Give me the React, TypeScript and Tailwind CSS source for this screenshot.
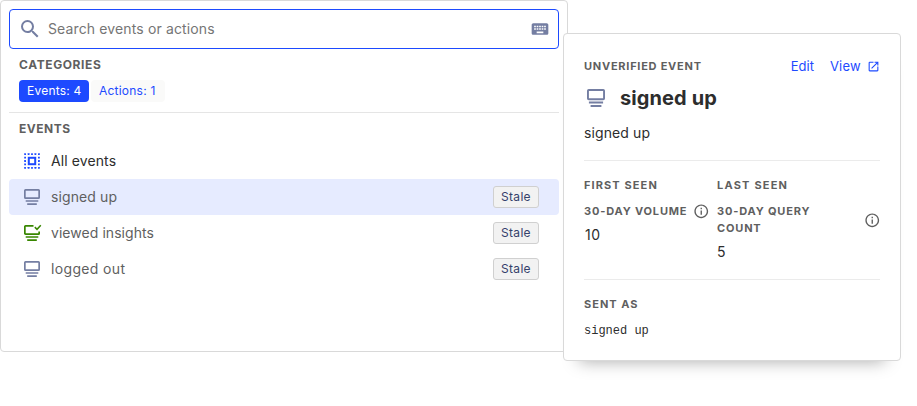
import React from 'react'
import { MdInfoOutline, MdKeyboard, MdOpenInNew, MdSearch } from 'react-icons/md'

function EventIcon({ size }: { size: number }) {
    return (
        <svg width={size} height={size} viewBox="0 0 16 16" fill="none" stroke="#747ea2" strokeWidth="1.7">
            <rect x="0.850" y="0.850" width="14.300" height="8.300" rx="0.7" />
            <path d="M1.700 12h12.600M3.200 15.100h9.600" />
        </svg>
    )
}

function VerifiedEventIcon() {
    return (
        <svg width="16" height="16" viewBox="0 0 16 16" fill="none" stroke="#388600" strokeWidth="1.7" className="overflow-visible">
            <path d="M9.500.85H1.550a.7.7 0 0 0-.7.7V8.450a.7.7 0 0 0 .7.7h12.900a.7.7 0 0 0 .7-.7V6.400" />
            <path d="M1.700 12h12.600M3.200 15.100h9.600" />
            <path d="M10.800 2.100l2.200 2.200L16.800.2" strokeWidth="1.5" />
        </svg>
    )
}

const dotOffsets = [0.2, 3.7, 7.1, 10.5, 14]

function AllEventsIcon() {
    return (
        <svg width="16" height="16" viewBox="0 0 16 16" fill="#1d4aff">
            {dotOffsets.map((x, col) =>
                dotOffsets.map((y, row) =>
                    col === 0 || col === 4 || row === 0 || row === 4 ? (
                        <rect key={`${x}-${y}`} x={x} y={y} width="1.8" height="1.8" rx="0.2" />
                    ) : null
                )
            )}
            <rect x="4.800" y="4.800" width="6.400" height="6.400" fill="none" stroke="#1d4aff" strokeWidth="2" />
        </svg>
    )
}

type EventRowProps = {
    name: string
    icon: React.ReactNode
    selected?: boolean
    stale?: boolean
    tracking?: string
}

function EventRow({ name, icon, selected, stale, tracking = 'tracking-[0.1px]' }: EventRowProps) {
    return (
        <div className={`flex h-9 items-center rounded pr-5 pl-[15px] ${selected ? 'bg-[#e6ebff]' : ''}`}>
            <span className="flex w-[27px]">{icon}</span>
            <span className={`flex-1 text-sm ${tracking} ${stale ? 'text-[#5f5f5f]' : 'text-[#2d2d2d]'}`}>{name}</span>
            {stale && (
                <span className="flex h-[22px] w-[46px] items-center justify-center rounded-[3px] border border-[#d0d0d0] bg-[#f2f2f2] text-xs tracking-[0.3px] text-[#35416b]">
                    Stale
                </span>
            )}
        </div>
    )
}

function Label({ children, tracking = 'tracking-[0.83px]' }: { children: React.ReactNode; tracking?: string }) {
    return <div className={`text-[11px] leading-[17px] font-bold text-[#5f5f5f] uppercase ${tracking}`}>{children}</div>
}

function Info() {
    return <MdInfoOutline size={16.5} className="shrink-0 text-[#5f5f5f]" />
}

function EventDetail() {
    return (
        <div className="absolute top-[33px] left-[563px] h-[328px] w-[338px] rounded border border-[#d9d9d9] bg-white px-5 text-[#2d2d2d] shadow-[0_16px_16px_-16px_rgba(0,0,0,0.35)]">
            <div className="mt-6 flex h-[17px] items-center justify-between">
                <Label tracking="tracking-[0.75px]">Unverified event</Label>
                <div className="flex items-center text-[13px] text-[#1d4aff]">
                    <span>Edit</span>
                    <span className="ml-4 tracking-[0.25px]">View</span>
                    <MdOpenInNew size={13} className="ml-1.5" />
                </div>
            </div>
            <div className="mt-[7px] flex h-8 items-center pl-[3px]">
                <EventIcon size={18} />
                <span className="ml-[15px] text-xl font-bold tracking-[0.1px]">signed up</span>
            </div>
            <div className="mt-2 h-[22px] text-sm leading-[22px] tracking-[0.1px]">signed up</div>
            <div className="mt-4 h-px bg-[#ebebeb]" />
            <div className="mt-4 grid grid-cols-[125px_163px] gap-x-2 gap-y-[9px]">
                <Label tracking="tracking-[1.1px]">First seen</Label>
                <Label tracking="tracking-[1.2px]">Last seen</Label>
                <div>
                    <div className="flex items-center justify-between">
                        <Label>30-day volume</Label>
                        <Info />
                    </div>
                    <div className="mt-1 pl-px text-sm leading-[22px] tracking-[0.5px]">10</div>
                </div>
                <div>
                    <div className="flex items-center justify-between">
                        <Label>
                            30-day query
                            <br />
                            count
                        </Label>
                        <Info />
                    </div>
                    <div className="mt-1 text-sm leading-[22px]">5</div>
                </div>
            </div>
            <div className="mt-4 h-px bg-[#ebebeb]" />
            <div className="mt-4">
                <Label tracking="tracking-[1px]">Sent as</Label>
            </div>
            <div className="mt-[9px] font-['Liberation_Mono',monospace] text-xs leading-[18px]">signed up</div>
        </div>
    )
}

export default function App() {
    return (
        <div className="relative h-[406px] w-[917px] overflow-hidden bg-white font-['Inter',sans-serif]">
            <div className="h-[352px] w-[568px] rounded border border-[#d9d9d9] bg-white p-2">
                <div className="flex h-10 items-center rounded border border-[#1d4aff] pr-2 pl-[9px]">
                    <MdSearch size={24} className="-ml-px text-[#747ea2]" />
                    <span className="ml-1.5 flex-1 text-sm tracking-[0.13px] text-[#757575]">Search events or actions</span>
                    <MdKeyboard size={20} className="text-[#747ea2]" />
                </div>
                <div className="border-b border-[#e5e5e5] pb-2.5 pl-2.5">
                    <div className="mt-[7px] text-xs leading-[18px] font-bold tracking-[0.6px] text-[#5f5f5f]">CATEGORIES</div>
                    <div className="mt-1.5 flex gap-0.5 text-xs leading-[22px] tracking-[0.22px]">
                        <span className="h-[22px] w-[70px] rounded bg-[#1d4aff] px-2 whitespace-nowrap text-white">Events: 4</span>
                        <span className="h-[22px] w-[74px] rounded bg-[#fafaf9] px-2 whitespace-nowrap text-[#1d4aff]">Actions: 1</span>
                    </div>
                </div>
                <div className="mt-[7px] mb-[5px] pl-2.5 text-xs leading-[18px] font-bold tracking-[0.5px] text-[#5f5f5f]">EVENTS</div>
                <EventRow name="All events" icon={<AllEventsIcon />} />
                <EventRow name="signed up" icon={<EventIcon size={16} />} selected stale />
                <EventRow name="viewed insights" icon={<VerifiedEventIcon />} stale tracking="tracking-[0.05px]" />
                <EventRow name="logged out" icon={<EventIcon size={16} />} stale tracking="tracking-[0.35px]" />
            </div>
            <EventDetail />
        </div>
    )
}
